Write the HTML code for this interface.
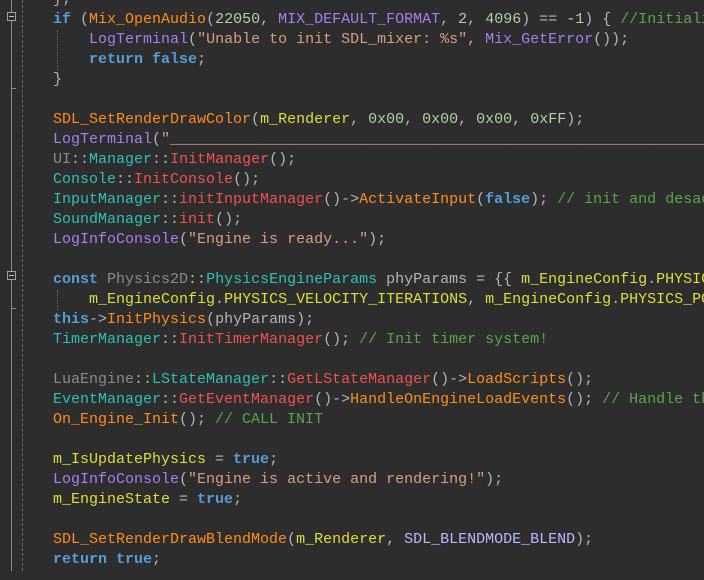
<!DOCTYPE html>
<html><head><meta charset="utf-8"><style>
html,body{margin:0;padding:0;background:#2d2d2d;width:704px;height:571px;overflow:hidden}
#c{position:absolute;left:53px;top:-10px;width:651px;height:590px;overflow:hidden;font:15px/20px "Liberation Mono",monospace;color:#b4b4b4;white-space:pre}
.k{color:#569cd6;font-weight:bold}.f{color:#ff8c1a}.m{color:#a57ff0}.t{color:#2cc0b4}.r{color:#f25050}
.v{color:#dede3a}.s{color:#d69d85}.n{color:#b5cea8}.c{color:#57a64a}.g{color:#8a8a8a}.e{color:#b8b8ff}
.box{position:absolute;left:7px;width:7px;height:7px;border:1px solid #a0a0a0;background:#2d2d2d}
.box:after{content:"";position:absolute;left:1px;top:3px;width:5px;height:1px;background:#c0c0c0}
.vl{position:absolute;left:11px;width:1px;background:#8a8a8a}
.tk{position:absolute;left:11px;width:5px;height:1px;background:#8a8a8a}
.dl{position:absolute;left:22px;top:0;height:571px;border-left:1px dashed #666}
.ig{position:absolute;left:57px;width:0;border-left:1px dotted #666}
</style></head><body>
<div class="dl"></div>
<div class="vl" style="top:0;height:12px"></div>
<div class="box" style="top:12px"></div>
<div class="vl" style="top:21px;height:68px"></div><div class="tk" style="top:88px"></div>
<div class="vl" style="top:88px;height:183px"></div>
<div class="box" style="top:271px"></div>
<div class="vl" style="top:280px;height:29px"></div><div class="tk" style="top:308px"></div>
<div class="vl" style="top:308px;height:263px"></div>
<div class="ig" style="top:30px;height:40px"></div>
<div class="ig" style="top:290px;height:20px"></div>
<div id="c">};
<span class="k">if</span> (<span class="f">Mix_OpenAudio</span>(<span class="n">22050</span>, <span class="m">MIX_DEFAULT_FORMAT</span>, <span class="n">2</span>, <span class="n">4096</span>) == <span class="n">-1</span>) { <span class="c">//Initialize SDL_mixer</span>
    <span class="m">LogTerminal</span>(<span class="s">"Unable to init SDL_mixer: %s"</span>, <span class="m">Mix_GetError</span>());
    <span class="k">return</span> <span class="k">false</span>;
}

<span class="f">SDL_SetRenderDrawColor</span>(<span class="v">m_Renderer</span>, <span class="n">0x00</span>, <span class="n">0x00</span>, <span class="n">0x00</span>, <span class="n">0xFF</span>);
<span class="m">LogTerminal</span>(<span class="s">"__________________________________________________________________________"</span>);
<span class="g">UI</span>::<span class="t">Manager</span>::<span class="r">InitManager</span>();
<span class="t">Console</span>::<span class="r">InitConsole</span>();
<span class="t">InputManager</span>::<span class="r">initInputManager</span>()-&gt;<span class="f">ActivateInput</span>(<span class="k">false</span>); <span class="c">// init and desactivate</span>
<span class="t">SoundManager</span>::<span class="r">init</span>();
<span class="m">LogInfoConsole</span>(<span class="s">"Engine is ready..."</span>);

<span class="k">const</span> <span class="g">Physics2D</span>::<span class="t">PhysicsEngineParams</span> phyParams = {{ <span class="v">m_EngineConfig</span>.<span class="v">PHYSICS_GRAVITY</span>
    <span class="v">m_EngineConfig</span>.<span class="v">PHYSICS_VELOCITY_ITERATIONS</span>, <span class="v">m_EngineConfig</span>.<span class="v">PHYSICS_POSITION</span>
<span class="k">this</span>-&gt;<span class="f">InitPhysics</span>(phyParams);
<span class="t">TimerManager</span>::<span class="r">InitTimerManager</span>(); <span class="c">// Init timer system!</span>

<span class="g">LuaEngine</span>::<span class="t">LStateManager</span>::<span class="r">GetLStateManager</span>()-&gt;<span class="f">LoadScripts</span>();
<span class="t">EventManager</span>::<span class="r">GetEventManager</span>()-&gt;<span class="f">HandleOnEngineLoadEvents</span>(); <span class="c">// Handle the</span>
<span class="f">On_Engine_Init</span>(); <span class="c">// CALL INIT</span>

<span class="v">m_IsUpdatePhysics</span> = <span class="k">true</span>;
<span class="m">LogInfoConsole</span>(<span class="s">"Engine is active and rendering!"</span>);
<span class="v">m_EngineState</span> = <span class="k">true</span>;

<span class="f">SDL_SetRenderDrawBlendMode</span>(<span class="v">m_Renderer</span>, <span class="e">SDL_BLENDMODE_BLEND</span>);
<span class="k">return</span> <span class="k">true</span>;
</div>
</body></html>
